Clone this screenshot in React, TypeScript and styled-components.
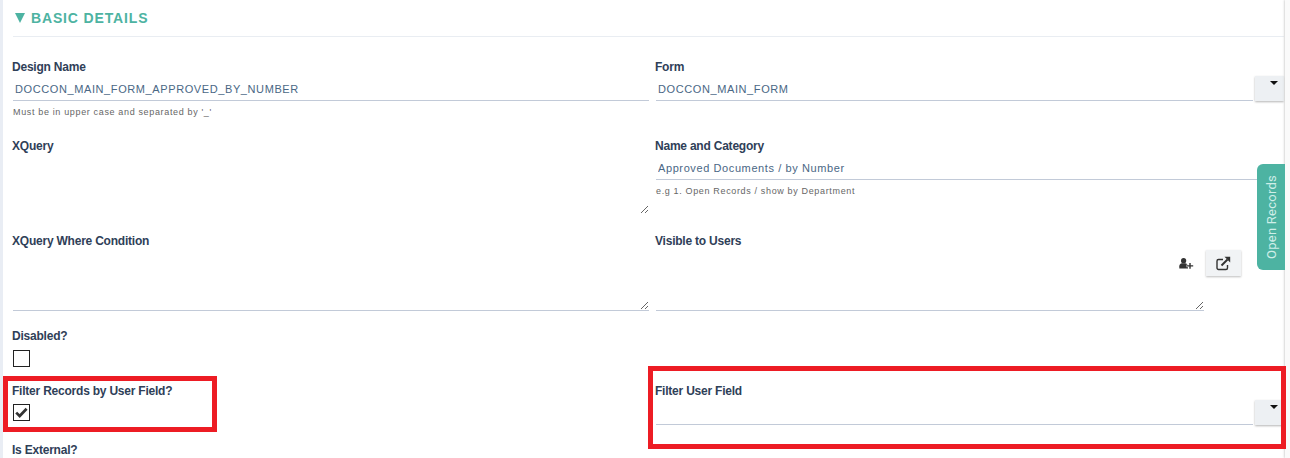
import React from 'react'
import styled, { createGlobalStyle } from 'styled-components'

const Global = createGlobalStyle`
  html, body {
    margin: 0;
    padding: 0;
    background: white;
    height: 458px;
    overflow: hidden;
  }
`
const Page = styled.div`
  position: relative;
  width: 1290px;
  height: 458px;
  overflow: hidden;
  box-sizing: border-box;
  padding: 0 6px 0 10px;
  background: white;
  font-family: 'Liberation Sans', Arial, sans-serif;
  border-left: 3px solid #e9edf4;
  &::after {
    content: '';
    position: absolute;
    top: 0;
    right: 0;
    bottom: 0;
    width: 5px;
    background: #fafafa;
    box-shadow: -1px 0 2px #d8d8d8;
  }
`
const SectionHeader = styled.div`
  height: 37px;
  border-bottom: 1px solid #e9edf2;
  display: flex;
  align-items: center;
  gap: 6px;
  padding-left: 2px;
  box-sizing: border-box;
  margin-bottom: 23px;
  color: #4db3a2;
  font-size: 14px;
  font-weight: bold;
  letter-spacing: 0.85px;
  text-transform: uppercase;
`
const Triangle = styled.span`
  width: 0;
  height: 0;
  border-left: 5px solid transparent;
  border-right: 5px solid transparent;
  border-top: 10px solid #4db3a2;
`
const Form = styled.div`
  display: grid;
  grid-template-columns: 636px 628px;
  column-gap: 7px;
`
const Field = styled.div<{ $height: number }>`
  height: ${p => p.$height}px;
  min-width: 0;
`
const Label = styled.div`
  color: #2f4058;
  font-size: 12px;
  font-weight: bold;
  line-height: 14px;
  letter-spacing: -0.22px;
  margin-left: -1px;
`
const ComboRow = styled.div`
  display: flex;
  align-items: flex-start;
  gap: 2px;
  margin-top: 2px;
`
const TextInput = styled.input`
  display: block;
  flex: 1;
  width: 100%;
  min-width: 0;
  height: 25px;
  box-sizing: border-box;
  border: 0;
  border-bottom: 1px solid #c2cad8;
  outline: 0;
  padding: 2px 2px 0;
  margin: 0;
  background: transparent;
  color: #4a6785;
  font-family: inherit;
  font-size: 11px;
  letter-spacing: 0.6px;
`
const FieldInput = styled(TextInput)`
  margin-top: 2px;
`
const Help = styled.div`
  color: #666666;
  font-size: 9px;
  letter-spacing: 0.65px;
  line-height: 11px;
  margin-top: 6px;
`
const TextArea = styled.textarea<{ $lined?: boolean; $height: number }>`
  display: block;
  width: 100%;
  height: ${p => p.$height}px;
  box-sizing: border-box;
  border: 0;
  border-bottom: 1px solid ${p => (p.$lined ? '#c2cad8' : 'transparent')};
  outline: 0;
  padding: 0;
  margin: 0;
  background: transparent;
  resize: vertical;
`
const DropButton = styled.button`
  flex: none;
  width: 29px;
  height: 25px;
  border: 0;
  padding: 5px 6px 0 0;
  display: flex;
  justify-content: flex-end;
  align-items: flex-start;
  background: #edf0f3;
  box-shadow: 0 1px 2px #b5b5b5;
  box-sizing: border-box;
`
const Caret = styled.span`
  width: 0;
  height: 0;
  border-left: 4px solid transparent;
  border-right: 4px solid transparent;
  border-top: 4px solid #111111;
`
const VisibleWrap = styled.div`
  position: relative;
  width: 548px;
`
const VisibleTools = styled.div`
  position: absolute;
  top: 2px;
  right: -37px;
  display: flex;
  align-items: center;
  gap: 12px;
`
const IconButton = styled.button`
  width: 35px;
  height: 26px;
  border: 0;
  padding: 0;
  display: flex;
  align-items: center;
  justify-content: center;
  background: #f1f3f5;
  box-shadow: 0 1px 2px #bdbdbd;
`
const Check = styled.div<{ $top: number }>`
  width: 17px;
  height: 17px;
  box-sizing: border-box;
  border: 1px solid #222222;
  background: white;
  margin-top: ${p => p.$top}px;
  display: flex;
  align-items: center;
  justify-content: center;
`
const SideTab = styled.div`
  position: absolute;
  left: 1254px;
  top: 164px;
  width: 28px;
  height: 106px;
  background: #4db3a2;
  color: #cfeee8;
  font-size: 13px;
  writing-mode: vertical-rl;
  transform: rotate(180deg);
  border-radius: 0 6px 6px 0;
  display: flex;
  align-items: center;
  justify-content: center;
  padding-right: 1px;
  box-sizing: border-box;
  font-family: Roboto, 'Liberation Sans', sans-serif;
  letter-spacing: 0.25px;
  z-index: 2;
`
const Highlight = styled.div<{ $left: number; $top: number; $width: number; $height: number }>`
  position: absolute;
  left: ${p => p.$left}px;
  top: ${p => p.$top}px;
  width: ${p => p.$width}px;
  height: ${p => p.$height}px;
  box-sizing: border-box;
  border: 5px solid #ed1c24;
  z-index: 3;
`

function UserPlusIcon() {
  return (
    <svg width="15" height="11" viewBox="0 0 15 11">
      <circle cx="4.6" cy="2.7" r="2.6" fill="#333" />
      <path d="M0.3 10.6V8.2C0.3 6.4 1.5 5.4 3 5.2h3.2C7.7 5.4 9 6.4 9 8.2v2.4z" fill="#333" />
      <path d="M7.6 7.9h6.6M10.9 4.8v6" stroke="white" strokeWidth="2.6" />
      <path d="M8 7.9h6.2M11 5v5.8" stroke="#333" strokeWidth="1.4" />
    </svg>
  )
}

function ExternalIcon() {
  return (
    <svg width="15" height="15" viewBox="0 0 15 15" fill="none">
      <path d="M11.5 9v3a1.5 1.5 0 0 1-1.5 1.5H2.5A1.5 1.5 0 0 1 1 12V5A1.5 1.5 0 0 1 2.5 3.5H7" stroke="#333" strokeWidth="1.4" />
      <path d="M5.5 9.5 11.5 3.5" stroke="#333" strokeWidth="2" />
      <path d="M8.5 0.8h5.7v5.7z" fill="#333" />
    </svg>
  )
}

function CheckIcon() {
  return (
    <svg width="13" height="11" viewBox="0 0 13 11" fill="none">
      <path d="M1.2 5.6 4.7 9 11.6 1.8" stroke="#333" strokeWidth="2.7" />
    </svg>
  )
}

export default function App() {
  return (
    <Page>
      <Global />
      <SectionHeader>
        <Triangle />
        <span>Basic Details</span>
      </SectionHeader>
      <Form>
        <Field $height={79}>
          <Label>Design Name</Label>
          <FieldInput readOnly value="DOCCON_MAIN_FORM_APPROVED_BY_NUMBER" />
          <Help>Must be in upper case and separated by '_'</Help>
        </Field>
        <Field $height={79}>
          <Label>Form</Label>
          <ComboRow>
            <TextInput readOnly value="DOCCON_MAIN_FORM" />
            <DropButton><Caret /></DropButton>
          </ComboRow>
        </Field>
        <Field $height={95}>
          <Label>XQuery</Label>
          <TextArea $height={62} />
        </Field>
        <Field $height={95}>
          <Label>Name and Category</Label>
          <FieldInput readOnly value="Approved Documents / by Number" />
          <Help>e.g 1. Open Records / show by Department</Help>
        </Field>
        <Field $height={95}>
          <Label>XQuery Where Condition</Label>
          <TextArea $lined $height={63} />
        </Field>
        <Field $height={95}>
          <Label>Visible to Users</Label>
          <VisibleWrap>
            <VisibleTools>
              <UserPlusIcon />
              <IconButton><ExternalIcon /></IconButton>
            </VisibleTools>
            <TextArea $lined $height={63} />
          </VisibleWrap>
        </Field>
        <Field $height={55}>
          <Label>Disabled?</Label>
          <Check $top={7} />
        </Field>
        <Field $height={55} />
        <Field $height={59}>
          <Label>Filter Records by User Field?</Label>
          <Check $top={6}><CheckIcon /></Check>
        </Field>
        <Field $height={59}>
          <Label>Filter User Field</Label>
          <ComboRow>
            <TextInput readOnly value="" />
            <DropButton><Caret /></DropButton>
          </ComboRow>
        </Field>
        <Field $height={20}>
          <Label>Is External?</Label>
        </Field>
      </Form>
      <SideTab>Open Records</SideTab>
      <Highlight $left={0} $top={376} $width={214} $height={56} />
      <Highlight $left={645} $top={366} $width={638} $height={83} />
    </Page>
  )
}
